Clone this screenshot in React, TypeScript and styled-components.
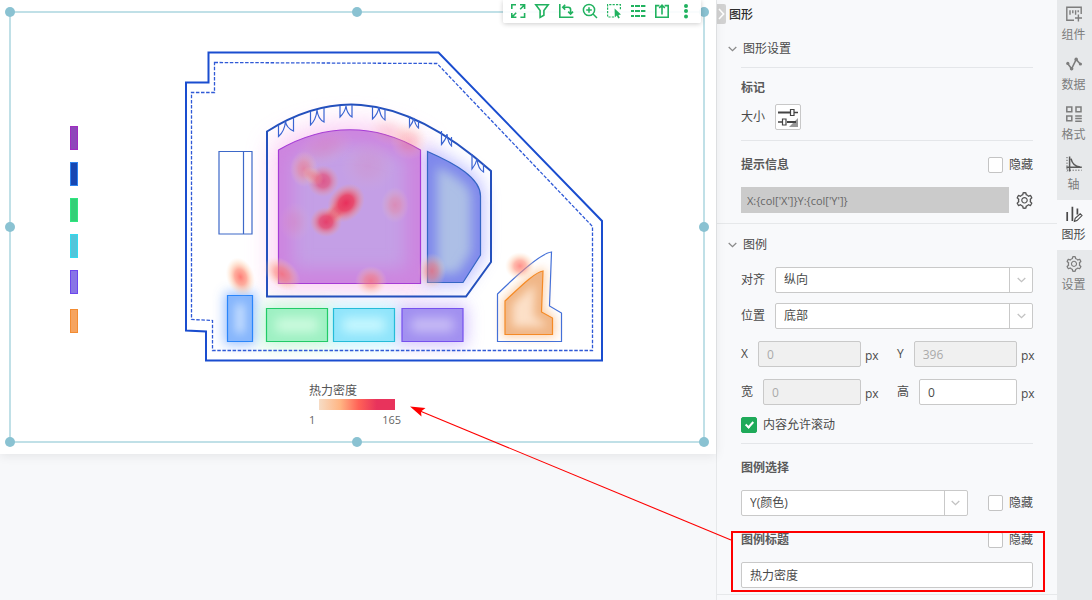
import React from "react";
import styled, { createGlobalStyle, css } from "styled-components";
import { AiOutlineSetting } from "react-icons/ai";

const GlobalStyle = createGlobalStyle`
  *, *::before, *::after { box-sizing: border-box; }
  body {
    margin: 0;
    background: #f7f8fa;
    color: #4a4a4a;
    font: 12px/16px "Open Sans", "Noto Sans CJK SC", sans-serif;
  }
  button, input, select { font: inherit; color: inherit; margin: 0; }
`;

const Shell = styled.div`
  position: relative;
  display: flex;
  min-height: 100vh;
  overflow: hidden;
`;

/* ---------- canvas ---------- */

const Workspace = styled.main`
  position: relative;
  flex: 1;
  min-width: 0;
`;

const Sheet = styled.section`
  padding: 11px 11px 11px 9px;
  background: #fff;
  box-shadow: 0 2px 10px rgba(0, 0, 0, 0.08);
`;

const Frame = styled.div`
  position: relative;
  min-height: 432px;
  border: 2px solid #c0e0e7;
`;

const Handles = styled.div`
  position: absolute;
  inset: -1px;
  pointer-events: none;
`;

const Handle = styled.span<{ $x: number; $y: number }>`
  position: absolute;
  left: ${(p) => p.$x}%;
  top: ${(p) => p.$y}%;
  width: 10px;
  height: 10px;
  margin: -5px;
  border-radius: 50%;
  background: #8ac2d2;
`;

const Plan = styled.svg`
  display: block;
  width: 100%;
  height: 370px;
`;

const HeatLegend = styled.div`
  width: 96px;
  margin: 0 auto;
`;

const HeatTitle = styled.div`
  color: #555;
`;

const HeatBar = styled.div`
  height: 11px;
  margin: 0 10px 2px;
  background: linear-gradient(90deg, #f6dcc5 0%, #ffb583 28%, #ff6257 52%, #e8335c 76%, #e8335c 100%);
`;

const HeatRange = styled.div`
  display: flex;
  justify-content: space-between;
  padding-right: 4px;
  font-size: 11px;
  color: #666;
`;

const Toolbar = styled.div`
  position: absolute;
  top: 0;
  right: 15px;
  display: flex;
  gap: 8px;
  padding: 3px 7px 4px;
  background: rgba(255, 255, 255, 0.9);
  border-radius: 0 0 2px 2px;
  box-shadow: 0 1px 5px rgba(0, 0, 0, 0.2);
`;

const ToolButton = styled.button`
  width: 16px;
  height: 16px;
  padding: 0;
  border: 0;
  background: none;
  color: #21b25f;
  svg { display: block; }
`;

/* ---------- settings panel ---------- */

const Panel = styled.aside`
  flex: none;
  width: 341px;
  border-left: 1px solid #e6e8ea;
  background: #f8f9fb;
`;

const PanelHeader = styled.header`
  display: flex;
  align-items: center;
  gap: 3px;
  height: 28px;
`;

const CollapseButton = styled.button`
  display: flex;
  align-items: center;
  justify-content: center;
  width: 9px;
  height: 20px;
  padding: 0;
  border: 0;
  border-radius: 0 2px 2px 0;
  background: #d2d2d2;
`;

const PanelTitle = styled.h2`
  margin: 0;
  padding-top: 2px;
  font-size: 12px;
  line-height: 16px;
  font-weight: 500;
  color: #2d2d2d;
`;

const Section = styled.section`
  padding: 0 24px 10px;
  border-bottom: 1px solid #e6e8ea;
`;

const LastSection = styled(Section)`
  padding-bottom: 6px;
`;

const SectionHead = styled.button`
  display: flex;
  align-items: center;
  gap: 6px;
  height: 39px;
  margin-left: -13px;
  padding: 2px 0 0;
  border: 0;
  background: none;
`;

const Divider = styled.hr<{ $gap?: number }>`
  height: 1px;
  margin: ${(p) => p.$gap ?? 0}px 0 0;
  border: 0;
  background: #e4e6e9;
`;

const Row = styled.div<{ $gap: number }>`
  display: flex;
  align-items: center;
  gap: 10px;
  margin-top: ${(p) => p.$gap}px;
`;

const GroupTitle = styled.h3`
  flex: 1;
  margin: 0;
  font-size: 12px;
  line-height: 16px;
  font-weight: 700;
  color: #5a5a5a;
`;

const SizeButton = styled.button`
  width: 26px;
  height: 26px;
  padding: 0;
  border: 1px solid #c8c8c8;
  border-radius: 2px;
  background: #fff;
  svg { display: block; }
`;

const GearButton = styled.button`
  flex: none;
  width: 17px;
  height: 17px;
  padding: 0;
  border: 0;
  background: none;
  color: #555;
  svg { display: block; }
`;

const fieldBox = css`
  flex: 1;
  min-width: 0;
  width: 100%;
  height: 26px;
  padding: 0 8px;
  border: 1px solid #c9c9c9;
  border-radius: 2px;
  background: #fff;
  outline: none;
`;

const TextInput = styled.input`
  ${fieldBox}
  &:disabled { background: #f0f0f0; color: #aaa; }
`;

const TipInput = styled.input`
  ${fieldBox}
  padding: 0 6px;
  border: 0;
  border-radius: 0;
  background: #cbcbcb;
  font-size: 11px;
  color: #666;
`;

const SelectWrap = styled.span`
  position: relative;
  flex: 1;
  display: flex;
`;

const SelectBox = styled.select`
  ${fieldBox}
  appearance: none;
`;

const SelectArrow = styled.span`
  position: absolute;
  top: 1px;
  right: 1px;
  bottom: 1px;
  width: 23px;
  display: flex;
  align-items: center;
  justify-content: center;
  border-left: 1px solid #c9c9c9;
  pointer-events: none;
`;

const CheckLabel = styled.label`
  display: flex;
  align-items: center;
  gap: 6px;
`;

const CheckBox = styled.input`
  appearance: none;
  display: grid;
  place-items: center;
  width: 15px;
  height: 16px;
  border: 1px solid #c4c4c4;
  border-radius: 2px;
  background: #fff;
  &:checked {
    width: 16px;
    border-color: #1faa59;
    background: #1faa59;
  }
  &:checked::after {
    content: "";
    width: 5px;
    height: 8px;
    margin-bottom: 3px;
    border: solid #fff;
    border-width: 0 2px 2px 0;
    transform: rotate(42deg);
  }
`;

const NumberPair = styled.div<{ $gap: number }>`
  display: grid;
  grid-template-columns: 1fr 1fr;
  gap: 20px;
  margin-top: ${(p) => p.$gap}px;
`;

const NumberLabel = styled.label`
  display: flex;
  align-items: center;
  gap: 10px;
`;

const NumberBox = styled.span`
  flex: 1;
  min-width: 0;
  display: flex;
  align-items: center;
  gap: 4px;
`;

const Unit = styled.span`
  width: 12px;
  padding-top: 3px;
`;

const TipRow = styled(Row)`
  gap: 7px;
`;

const SelectRow = styled(Row)`
  gap: 20px;
`;

/* ---------- right navigation ---------- */

const Rail = styled.nav`
  flex: none;
  width: 35px;
  background: #e7e9eb;
`;

const RailLink = styled.a<{ $active?: boolean }>`
  display: flex;
  flex-direction: column;
  align-items: center;
  gap: 5px;
  height: 50px;
  padding: 6px 2px 0 0;
  text-decoration: none;
  color: ${(p) => (p.$active ? "#4a4a4a" : "#7d7d7d")};
  background: ${(p) => (p.$active ? "#f8f9fb" : "transparent")};
  svg { flex: none; width: 16px; height: 16px; overflow: visible; }
`;

/* ---------- callout ---------- */

const Callout = styled.svg`
  position: absolute;
  right: 47px;
  top: 400px;
  pointer-events: none;
`;

/* ---------- icons ---------- */

const Line: React.FC<{ children: React.ReactNode; w?: number }> = ({ children, w = 1.6 }) => (
  <svg width="16" height="16" viewBox="0 0 16 16" fill="none" stroke="currentColor" strokeWidth={w}>
    {children}
  </svg>
);

const Chevron = ({ color = "#8a8a8a" }: { color?: string }) => (
  <svg width="9" height="6" viewBox="0 0 9 6" fill="none" stroke={color} strokeWidth="1.3">
    <path d="M.7 1l3.8 3.6L8.3 1" />
  </svg>
);

const tools: { name: string; icon: React.ReactNode }[] = [
  { name: "全屏", icon: <Line><path d="M1.8 6V1.8H6M10 1.8h4.6V6M14.6 1.8l-4.4 4.4M14.6 10v4.2h-4.2M6.4 14.2H1.8V10M1.8 14.2l4.4-4.4" /></Line> },
  { name: "筛选", icon: <Line><path d="M1.8 1.8h12.4L9.9 7.6v4.6l-3.8 2.2V7.6z" /></Line> },
  { name: "切换轴", icon: <Line><path d="M1.8 1v13.2H15.4M4.8 4.2h5.4q2.4 0 2.4 2.4v4.2M7.2 1.8L4.8 4.2l2.4 2.4M10.2 8.6l2.4 2.4L15 8.6" /></Line> },
  { name: "放大", icon: <Line w={1.5}><circle cx="7" cy="7" r="5.6" /><path d="M11 11l4 4M4.2 7h5.6M7 4.2v5.6" /></Line> },
  {
    name: "框选",
    icon: (
      <Line w={1.2}>
        <path d="M8 14H1.6V1.6H14.4V7" strokeDasharray="2.2 1.2" />
        <path d="M8.6 5.6l6.4 6-2.6.3 1.4 2.8-1.6.8-1.4-2.9-2 1.9z" fill="currentColor" stroke="none" />
      </Line>
    ),
  },
  {
    name: "明细",
    icon: (
      <Line w={2}>
        <path d="M1 3h3M5 3h5M11 3h4.4M1 8h3M5 8h5M11 8h4.4M1 13h3M5 13h5M11 13h4.4" />
      </Line>
    ),
  },
  { name: "导出", icon: <Line><path d="M5.4 2.6H1.8v11.6h12.4V2.6h-3.6M8 11.6V2.4M5.2 5L8 2.2 10.8 5" /></Line> },
  {
    name: "更多",
    icon: (
      <Line>
        <g fill="currentColor" stroke="none">
          <circle cx="8" cy="2.9" r="2" /><circle cx="8" cy="8.1" r="2" /><circle cx="8" cy="13.4" r="2" />
        </g>
      </Line>
    ),
  },
];

const railItems: { name: string; icon: React.ReactNode; active?: boolean }[] = [
  { name: "组件", icon: <Line w={1.4}><path d="M15.2 8V1.2H.8v13H8M4 4.2v4.6M6.8 4.2v3M9.6 4.2v4.6M12.2 4.2v2M12.4 8.6v6.8M9 12h7" /></Line> },
  {
    name: "数据",
    icon: (
      <Line w={1.6}>
        <path d="M1.6 7.4l4 5.4 4.6-9.4 4 4.6" />
        <g fill="currentColor" stroke="none">
          <circle cx="1.8" cy="7.4" r="1.6" /><circle cx="5.6" cy="12.8" r="1.8" /><circle cx="10.2" cy="3.4" r="1.8" /><circle cx="14.4" cy="8" r="1.6" />
        </g>
      </Line>
    ),
  },
  { name: "格式", icon: <Line w={1.5}><path d="M.8.9h5v4.8h-5zM10 .9h5v4.8h-5zM.8 10h5v4.8h-5zM9.2 10h6.6M9.2 12.6h6.6M9.2 15.2h6.6" /></Line> },
  {
    name: "轴",
    icon: (
      <Line w={1.5}>
        <g stroke="#5a5a5a">
          <path d="M3.6.6v14.8M.4 11.2h15.4M5 2.6c1 4.6 3.8 7.6 9 8.4" />
          <path d="M1 1v14.4M1 14.2h14.6" strokeWidth="1" strokeDasharray="1.2 1.6" />
        </g>
      </Line>
    ),
  },
  { name: "图形", active: true, icon: <Line w={1.7}><path d="M1.2 6v9M6.4.8V15M11.4 2.6v6" /><path d="M8.4 15.4l.8-3 5-4.6 1.8 1.8-5 5z" strokeWidth="1.1" /></Line> },
  { name: "设置", icon: <AiOutlineSetting viewBox="60 60 904 904" /> },
];

/* ---------- floor plan ---------- */

const PURPLE_HALL = "M278.5 150C325 123 375 123 420.5 150V283.5H278.5Z";
const BLUE_HALL = "M427.5 151.5C456 164 480.5 178 480.5 196V255L463 282.5H427.5Z";
const ORANGE_ZONE = "M505 301C520 287 535 272 543 271L541.5 312 552.5 318V334.5H505Z";
const box = (x: number, y: number, w: number, h: number) => `M${x} ${y}h${w}v${h}h${-w}z`;

const zones = [
  { id: "hall", d: PURPLE_HALL, core: "#c49fe6", rim: "#cd84df", line: "#a63bd6", glow: "#f9c2f1", spread: 13, depth: 17 },
  { id: "annex", d: BLUE_HALL, core: "#adbfe6", rim: "#7f88ec", line: "#3566c4", glow: "#b9b9ff", spread: 8, depth: 11 },
  { id: "gate", d: box(227.5, 295.5, 25, 46), core: "#d2e6ff", rim: "#86b6fc", line: "#2a86fb", glow: "#86b4ff", spread: 6, depth: 10 },
  { id: "green", d: box(266.5, 308.5, 61, 33), core: "#cdfbdf", rim: "#9df0c2", line: "#20cb67", glow: "#b4f5ce", spread: 8, depth: 11 },
  { id: "cyan", d: box(333.5, 308.5, 61, 33), core: "#c8f8ff", rim: "#8fe4fb", line: "#24bcd8", glow: "#b5f0ff", spread: 8, depth: 11 },
  { id: "violet", d: box(402, 308.5, 61, 33), core: "#c8bcf5", rim: "#a08ff0", line: "#7650ee", glow: "#cbb8fb", spread: 8, depth: 11 },
  { id: "orange", d: ORANGE_ZONE, core: "#fce0c8", rim: "#f0b686", line: "#f58a25", glow: "#fbc89b", spread: 5, depth: 9 },
];

const doors = [
  [278.5, 125, 136.5, 285.5, 121.5, 293.5, 131, 118],
  [310.5, 112, 125, 317, 110, 324, 122, 108],
  [340, 106, 117, 346, 106, 352, 117, 105],
  [372.5, 107, 119, 379, 107, 385, 120, 109],
  [409.5, 116, 127, 414, 118, 418.5, 128, 120],
  [441.5, 131, 144.5, 447, 134, 451.5, 146, 137],
  [472, 154, 169, 477, 159, 483.5, 172, 164],
];

const heat = [
  { x: 336, y: 212, rx: 9, ry: 17, a: 45, o: 0.7, hot: true },
  { x: 346, y: 203, rx: 17, ry: 21, a: 40, o: 1, hot: true },
  { x: 326, y: 222, rx: 16, ry: 15, a: 0, o: 0.85, hot: true },
  { x: 323, y: 181, rx: 16, ry: 16, a: 0, o: 0.65, hot: true },
  { x: 304, y: 169, rx: 14, ry: 18, a: 0, o: 0.55 },
  { x: 313, y: 176, rx: 8, ry: 12, a: -55, o: 0.4 },
  { x: 395, y: 205, rx: 14, ry: 18, a: 0, o: 0.4 },
  { x: 282, y: 274, rx: 14, ry: 21, a: -50, o: 0.8 },
  { x: 371, y: 281, rx: 16, ry: 15, a: 0, o: 0.7 },
  { x: 432, y: 271, rx: 14, ry: 18, a: 0, o: 0.75 },
  { x: 520, y: 266, rx: 15, ry: 14, a: 0, o: 0.85 },
  { x: 240.5, y: 277, rx: 14, ry: 20, a: -18, o: 1 },
  { x: 409, y: 141, rx: 19, ry: 19, a: 0, o: 0.35 },
  { x: 390, y: 131, rx: 24, ry: 15, a: 15, o: 0.2 },
  { x: 325, y: 148, rx: 30, ry: 18, a: -20, o: 0.15 },
  { x: 368, y: 166, rx: 28, ry: 26, a: 0, o: 0.12 },
  { x: 295, y: 222, rx: 16, ry: 20, a: 0, o: 0.15 },
];

const keys = [
  { y: 126, fill: "#8f47ba", line: "#a02cc0" },
  { y: 162, fill: "#1747b2", line: "#2d83f0" },
  { y: 198, fill: "#33cf77", line: "#2ee680" },
  { y: 234, fill: "#52c5da", line: "#30dcef" },
  { y: 270, fill: "#8975e6", line: "#6c47ee" },
  { y: 309, fill: "#f6a45f", line: "#f38c32" },
];

const FloorPlan = () => (
  <Plan viewBox="11 13 692 370" role="img" aria-label="热力密度">
    <defs>
      <radialGradient id="hot">
        <stop offset="0" stopColor="#e8305c" />
        <stop offset=".4" stopColor="#ea4465" stopOpacity=".92" />
        <stop offset=".72" stopColor="#f07c7c" stopOpacity=".45" />
        <stop offset="1" stopColor="#f0a58c" stopOpacity="0" />
      </radialGradient>
      <radialGradient id="warm">
        <stop offset="0" stopColor="#ff6f68" stopOpacity=".9" />
        <stop offset=".4" stopColor="#ff8a74" stopOpacity=".7" />
        <stop offset=".75" stopColor="#ffbe92" stopOpacity=".3" />
        <stop offset="1" stopColor="#ffd9b8" stopOpacity="0" />
      </radialGradient>
      {zones.map((z) => (
        <React.Fragment key={z.id}>
          <clipPath id={`clip-${z.id}`}><path d={z.d} /></clipPath>
          <filter id={`glow-${z.id}`} x="-80%" y="-80%" width="260%" height="260%">
            <feGaussianBlur stdDeviation={z.spread} />
          </filter>
          <filter id={`rim-${z.id}`} x="-60%" y="-60%" width="220%" height="220%">
            <feGaussianBlur stdDeviation={z.depth / 2} />
          </filter>
        </React.Fragment>
      ))}
    </defs>

    {keys.map((k) => (
      <rect key={k.y} x="70.5" y={k.y + 0.5} width="7" height="23" fill={k.fill} stroke={k.line} />
    ))}

    {zones.map((z) => (
      <path key={z.id} d={z.d} fill={z.glow} stroke={z.glow} strokeWidth={z.spread} filter={`url(#glow-${z.id})`} opacity=".85" />
    ))}

    <path d="M208.5 52.5H438.5L602 221V360.5H206V331.5L186 330.5V82.5H208.5Z" fill="none" stroke="#1a4dcf" strokeWidth="2" />
    <path
      d="M214.5 62.5L437 63.5 592.5 226.5V350.5H212.5V320.5L191.5 319.5V92.5H214.5Z"
      fill="none" stroke="#2f59d6" strokeWidth="1.3" strokeDasharray="3.5 1.6"
    />
    <path d="M219 151.5H252V234H219ZM243.5 151.5V234" fill="none" stroke="#3d68c8" strokeWidth="1.2" />

    {zones.map((z) => (
      <g key={z.id}>
        <g clipPath={`url(#clip-${z.id})`}>
          <path d={z.d} fill={z.core} />
          <path d={z.d} fill="none" stroke={z.rim} strokeWidth={z.depth * 1.7} filter={`url(#rim-${z.id})`} />
        </g>
        <path d={z.d} fill="none" stroke={z.line} strokeWidth="1.2" />
      </g>
    ))}

    <path d="M267 131.5C320 98 390 81 491 171V262L466 296.5H267Z" fill="none" stroke="#2450bd" strokeWidth="2" />
    <path
      d="M497.5 294C518 274 541 253 551.5 252L549.5 306 561.5 313V341.5H497.5Z"
      fill="none" stroke="#4470d8" strokeWidth="1.2"
    />
    {doors.map(([x1, t1, b1, cx, cy, x2, b2, t2]) => (
      <path
        key={x1}
        d={`M${x1} ${t1}V${b1}Q${cx - 1} ${b1 - 5} ${cx} ${cy}Q${cx + 1} ${b2 - 3} ${x2} ${b2}V${t2}`}
        fill="none" stroke="#3a64d2" strokeWidth="1.2"
      />
    ))}

    {heat.map((h, i) => (
      <ellipse
        key={i} cx={h.x} cy={h.y} rx={h.rx} ry={h.ry} opacity={h.o}
        transform={`rotate(${h.a} ${h.x} ${h.y})`} fill={h.hot ? "url(#hot)" : "url(#warm)"}
      />
    ))}
  </Plan>
);

/* ---------- composed controls ---------- */

const Dropdown = ({ id, value, label }: { id: string; value: string; label?: string }) => (
  <SelectWrap>
    <SelectBox id={id} aria-label={label} defaultValue={value}>
      <option>{value}</option>
    </SelectBox>
    <SelectArrow><Chevron color="#c2c2c2" /></SelectArrow>
  </SelectWrap>
);

const NumberField = ({ name, value, disabled }: { name: string; value: string; disabled?: boolean }) => (
  <NumberLabel>
    {name}
    <NumberBox>
      <TextInput defaultValue={value} disabled={disabled} />
      <Unit>px</Unit>
    </NumberBox>
  </NumberLabel>
);

const HideCheck = () => (
  <CheckLabel>
    <CheckBox type="checkbox" />
    隐藏
  </CheckLabel>
);

const handles = [[0, 0], [50, 0], [100, 0], [0, 50], [100, 50], [0, 100], [50, 100], [100, 100]];

export default function App() {
  return (
    <Shell>
      <GlobalStyle />
      <Workspace>
        <Sheet>
          <Frame>
            <FloorPlan />
            <HeatLegend>
              <HeatTitle>热力密度</HeatTitle>
              <HeatBar />
              <HeatRange><span>1</span><span>165</span></HeatRange>
            </HeatLegend>
            <Handles>
              {handles.map(([x, y]) => <Handle key={`${x}-${y}`} $x={x} $y={y} />)}
            </Handles>
          </Frame>
        </Sheet>
        <Toolbar role="toolbar">
          {tools.map((t) => <ToolButton key={t.name} type="button" aria-label={t.name}>{t.icon}</ToolButton>)}
        </Toolbar>
      </Workspace>

      <Panel>
        <PanelHeader>
          <CollapseButton type="button" aria-label="收起">
            <svg width="7" height="12" viewBox="0 0 7 12" fill="none" stroke="#fff" strokeWidth="1.6"><path d="M1 1l4.6 5L1 11" /></svg>
          </CollapseButton>
          <PanelTitle>图形</PanelTitle>
        </PanelHeader>

        <Section>
          <SectionHead type="button"><Chevron />图形设置</SectionHead>
          <Divider />
          <Row $gap={12}><GroupTitle>标记</GroupTitle></Row>
          <Row $gap={8}>
            <label htmlFor="size">大小</label>
            <SizeButton id="size" type="button">
              <svg width="24" height="24" viewBox="1 1 24 24" fill="none" stroke="#444">
                <path d="M23 14v9h-9z" fill="#999" stroke="none" />
                <path d="M3 8.5h12M12 18h9" strokeWidth="2" />
                <path d="M19 8.5h4M3 18h4" strokeWidth="1.4" />
                <path d="M15.5 5.5h3.5v6h-3.5zM7.5 15h3.5v6H7.5z" fill="#fff" strokeWidth="1.2" />
              </svg>
            </SizeButton>
          </Row>
          <Divider $gap={10} />
          <Row $gap={16}><GroupTitle>提示信息</GroupTitle><HideCheck /></Row>
          <TipRow $gap={14}>
            <TipInput aria-label="提示信息" defaultValue="X:{col['X']}Y:{col['Y']}" />
            <GearButton type="button" aria-label="设置提示信息"><AiOutlineSetting size={17} viewBox="60 60 904 904" /></GearButton>
          </TipRow>
        </Section>

        <LastSection>
          <SectionHead type="button"><Chevron />图例</SectionHead>
          <Row $gap={4}><label htmlFor="align">对齐</label><Dropdown id="align" value="纵向" /></Row>
          <Row $gap={10}><label htmlFor="place">位置</label><Dropdown id="place" value="底部" /></Row>
          <NumberPair $gap={12}>
            <NumberField name="X" value="0" disabled />
            <NumberField name="Y" value="396" disabled />
          </NumberPair>
          <NumberPair $gap={12}>
            <NumberField name="宽" value="0" disabled />
            <NumberField name="高" value="0" />
          </NumberPair>
          <Row $gap={12}>
            <CheckLabel><CheckBox type="checkbox" defaultChecked />内容允许滚动</CheckLabel>
          </Row>
          <Divider $gap={10} />
          <Row $gap={16}><GroupTitle>图例选择</GroupTitle></Row>
          <SelectRow $gap={14}><Dropdown id="pick" label="图例选择" value="Y(颜色)" /><HideCheck /></SelectRow>
          <Row $gap={16}><GroupTitle>图例标题</GroupTitle><HideCheck /></Row>
          <Row $gap={14}><TextInput aria-label="图例标题" defaultValue="热力密度" /></Row>
        </LastSection>
      </Panel>

      <Rail>
        {railItems.map((r) => (
          <RailLink key={r.name} href="#" $active={r.active}>{r.icon}{r.name}</RailLink>
        ))}
      </Rail>

      <Callout width="640" height="192" viewBox="405 400 640 192" fill="none" stroke="#fe0000">
        <rect x="732" y="532" width="312" height="59" strokeWidth="2" />
        <path d="M731 540L420 411" strokeWidth="1.1" />
        <path d="M410 406.5L425.5 408 421 411.5 421.5 416.5Z" fill="#fe0000" stroke="none" />
      </Callout>
    </Shell>
  );
}
